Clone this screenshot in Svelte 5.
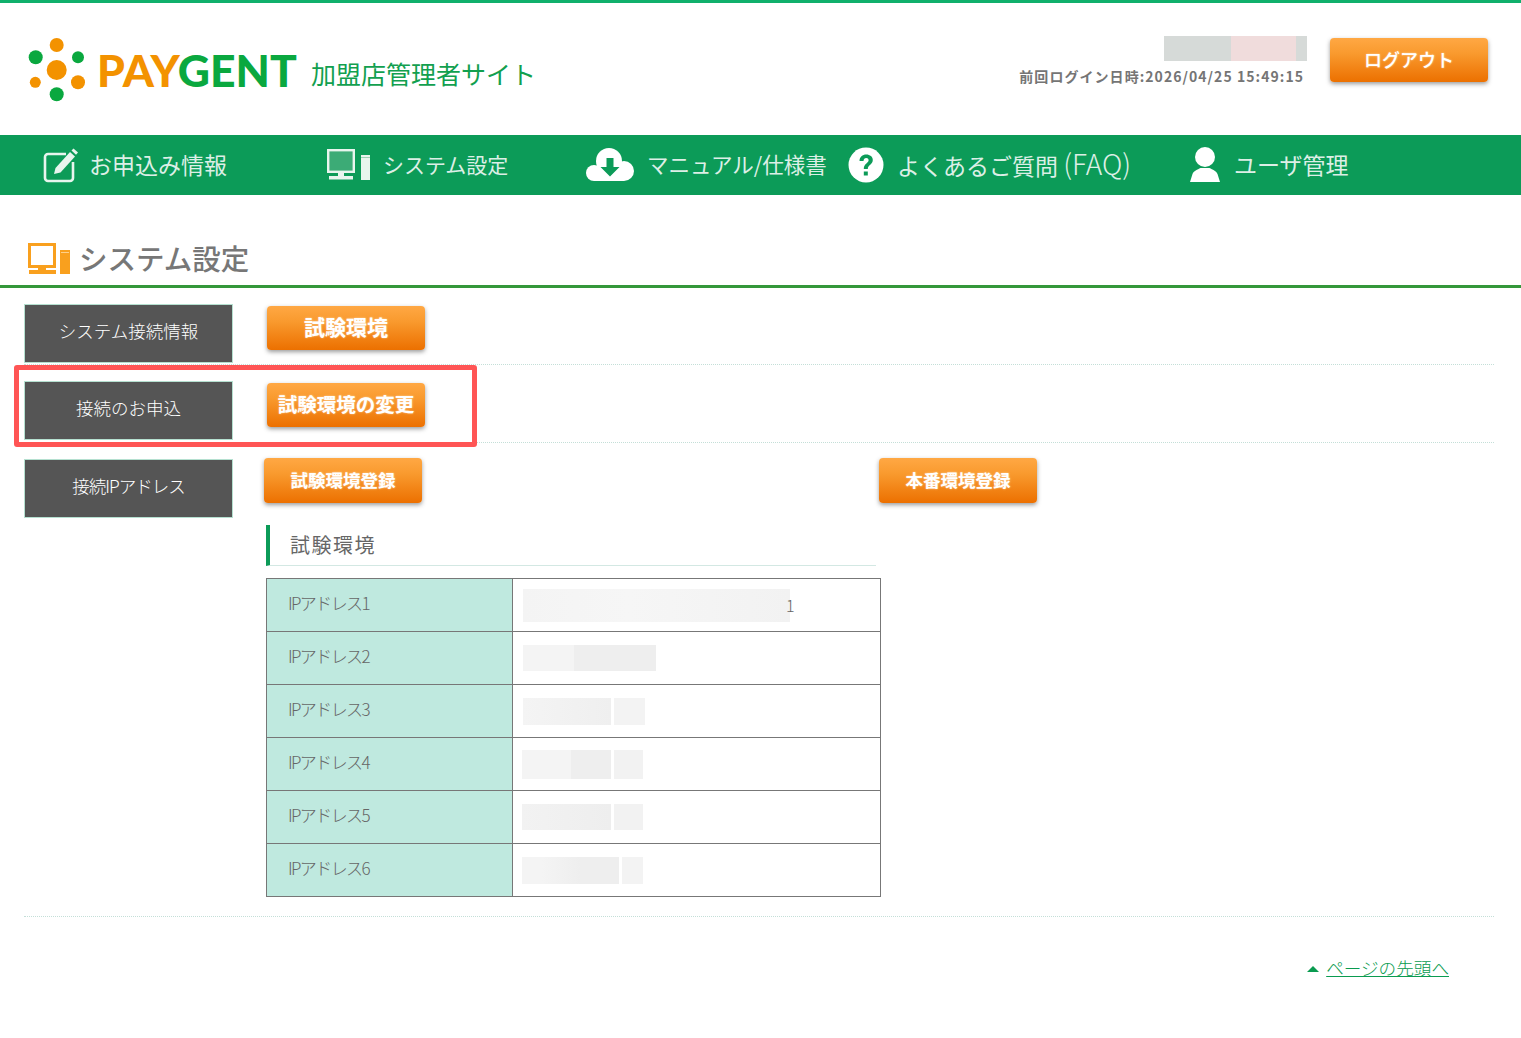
<script lang="ts">
  const addresses = [
    { name: 'IPアドレス1', tail: '1', h: 33, offset: 0, blocks: [{ w: 267, c: 'linear-gradient(90deg,#f4f4f4,#f6f6f6 40%,#f2f2f2)' }] },
    { name: 'IPアドレス2', h: 26, offset: 0, blocks: [{ w: 133, c: 'linear-gradient(90deg,#f4f4f4 38%,#eeeeee 38%)' }] },
    { name: 'IPアドレス3', h: 27, offset: 0, blocks: [{ w: 88, c: 'linear-gradient(90deg,#f4f4f4,#efefef)' }, { w: 31, c: '#f3f3f3' }] },
    { name: 'IPアドレス4', h: 29, offset: -1, blocks: [{ w: 89, c: 'linear-gradient(90deg,#f4f4f4 55%,#eeeeee 55%)' }, { w: 29, c: '#f2f2f2' }] },
    { name: 'IPアドレス5', h: 26, offset: -1, blocks: [{ w: 89, c: 'linear-gradient(90deg,#f2f2f2,#eeeeee)' }, { w: 29, c: '#f2f2f2' }] },
    { name: 'IPアドレス6', h: 27, offset: -1, blocks: [{ w: 97, c: 'linear-gradient(90deg,#f4f4f4 20%,#eeeeee 60%)' }, { w: 21, c: '#f3f3f3' }] },
  ]
</script>

<div class="page">
  <header class="head">
    <div class="brand">
      <svg class="dots" width="58" height="66" viewBox="28 37 58 66" aria-hidden="true">
        <circle cx="56.7" cy="45" r="7" fill="#f39200" />
        <circle cx="35.7" cy="57.3" r="7" fill="#0aa83f" />
        <circle cx="78" cy="57.3" r="6" fill="#0aa83f" />
        <circle cx="56.7" cy="70" r="10" fill="#f39200" />
        <circle cx="35.3" cy="82.3" r="5.5" fill="#f39200" />
        <circle cx="78" cy="82.3" r="7" fill="#f39200" />
        <circle cx="56.7" cy="94.3" r="7" fill="#0aa83f" />
      </svg>
      <div class="word"><span class="pay">PAY</span><span class="gent">GENT</span></div>
      <div class="site">加盟店管理者サイト</div>
    </div>
    <div class="account">
      <div class="who">
        <div class="who-mask"></div>
        <div class="last">前回ログイン日時:2026/04/25 15:49:15</div>
      </div>
      <a class="btn logout" href="#top">ログアウト</a>
    </div>
  </header>

  <nav class="nav">
    <a class="item i1" href="#top">
      <svg width="36" height="36" viewBox="0 0 36 36" aria-hidden="true">
        <path d="M23 7H5a3 3 0 0 0-3 3v21a3 3 0 0 0 3 3h22a3 3 0 0 0 3-3V15" fill="none" stroke="#e8f5ee" stroke-width="2.6" />
        <path d="M11 27l1.5-6L27 5l5 4.500-14.500 16z" fill="#e8f5ee" />
        <path d="M28.500 3.500l2-2 4.500 4-2 2.200z" fill="#e8f5ee" />
      </svg>
      <span>お申込み情報</span>
    </a>
    <a class="item i2" href="#top">
      <svg width="44" height="32" viewBox="0 0 44 32" aria-hidden="true">
        <rect x="1.200" y="1.200" width="25.600" height="21.600" fill="#3cab76" stroke="#e8f5ee" stroke-width="2.400" />
        <path d="M11 23h6v4h-6zM2 27h24v3.500H2z" fill="#e8f5ee" />
        <rect x="34" y="6" width="9" height="25" fill="#e8f5ee" />
        <rect x="34" y="8" width="9" height="1" fill="#9bcfb4" />
      </svg>
      <span>システム設定</span>
    </a>
    <a class="item i3" href="#top">
      <svg width="48" height="34" viewBox="0 0 48 34" aria-hidden="true">
        <circle cx="8" cy="25" r="8" fill="#fff" />
        <circle cx="23" cy="13" r="13" fill="#fff" />
        <circle cx="38" cy="23" r="10" fill="#fff" />
        <rect x="8" y="19" width="30" height="14" fill="#fff" />
        <path d="M20.500 10h7v9h6L24 28.500 14.500 19h6z" fill="#0c9b58" />
      </svg>
      <span>マニュアル/仕様書</span>
    </a>
    <a class="item i4" href="#top">
      <svg width="36" height="36" viewBox="0 0 36 36" aria-hidden="true">
        <circle cx="18" cy="18" r="17.500" fill="#fff" />
        <path d="M11.500 14c0-4 3-6.500 6.800-6.500 3.700 0 6.500 2.300 6.500 5.500 0 4.800-5 4.800-5 9h-4c0-5.500 4.800-5.800 4.800-8.700 0-1.300-1-2.200-2.400-2.200-1.500 0-2.600 1-2.700 2.900z" fill="#0c9b58" />
        <rect x="15.800" y="24.500" width="4" height="4" fill="#0c9b58" />
      </svg>
      <span>よくあるご質問 <span class="faq">(FAQ)</span></span>
    </a>
    <a class="item i5" href="#top">
      <svg width="32" height="36" viewBox="0 0 32 36" aria-hidden="true">
        <ellipse cx="16" cy="10" rx="10" ry="10" fill="#fff" />
        <path d="M1 35l2.500-8c1-3 5-4.500 8-6h9c3 1.500 7 3 8 6l2.500 8z" fill="#fff" />
      </svg>
      <span>ユーザ管理</span>
    </a>
  </nav>

  <h1 class="title">
    <svg width="42" height="32" viewBox="0 0 42 32" aria-hidden="true">
      <rect x="1.500" y="1.500" width="25" height="22" fill="none" stroke="#f9a01e" stroke-width="3" />
      <path d="M10 24h8v3h-8zM1 27h27v4H1z" fill="#f9a01e" />
      <rect x="32" y="7" width="10" height="24" fill="#f9a01e" />
      <rect x="33" y="9" width="8" height="1" fill="#ffd08a" />
    </svg>
    <span>システム設定</span>
  </h1>

  <main class="content">
    <section class="row first">
      <div class="label">システム接続情報</div>
      <div class="body"><a class="btn b-test" href="#top">試験環境</a></div>
    </section>

    <section class="row">
      <div class="label">接続のお申込</div>
      <div class="body"><a class="btn b-change" href="#top">試験環境の変更</a></div>
      <div class="callout"></div>
    </section>

    <section class="row last-row">
      <div class="label tight">接続IPアドレス</div>
      <div class="body wide">
        <div class="reg">
          <a class="btn b-reg" href="#top">試験環境登録</a>
          <a class="btn b-reg" href="#top">本番環境登録</a>
        </div>
        <h2 class="sub">試験環境</h2>
        <table class="ips">
          <tbody>
            {#each addresses as a}
              <tr>
                <th><span>{a.name}</span></th>
                <td>
                  <div class="vals" style="margin-left:{a.offset}px">
                    {#each a.blocks as b}
                      <i class="mask" style="width:{b.w}px;height:{a.h}px;background:{b.c}"></i>
                    {/each}
                    {#if a.tail}<span class="tail">{a.tail}</span>{/if}
                  </div>
                </td>
              </tr>
            {/each}
          </tbody>
        </table>
      </div>
    </section>

    <div class="totop">
      <i class="tri"></i><a href="#top">ページの先頭へ</a>
    </div>
  </main>
</div>

<style>
  :global(body) {
    margin: 0;
    background: #fff;
  }

  .page {
    font-family: "Noto Sans CJK JP", "Noto Sans", sans-serif;
    color: #666;
    min-height: 1038px;
  }

  a {
    text-decoration: none;
  }

  .head {
    height: 132px;
    border-top: 3px solid #10b06c;
    display: flex;
    justify-content: space-between;
    box-sizing: content-box;
  }

  .brand {
    display: flex;
    align-items: flex-start;
    padding: 34px 0 0 28px;
  }

  .word {
    font-family: Lato, "Liberation Sans", sans-serif;
    font-weight: 900;
    font-size: 44.500px;
    line-height: 66px;
    margin-left: 11px;
    white-space: nowrap;
  }

  .pay {
    color: #f39200;
  }

  .gent {
    color: #0aa83f;
  }

  .site {
    font-size: 25px;
    line-height: 36px;
    color: #12a04f;
    margin: 18px 0 0 14px;
    white-space: nowrap;
  }

  .account {
    display: flex;
    align-items: flex-start;
    padding: 33px 33px 0 0;
  }

  .who {
    display: flex;
    flex-direction: column;
    align-items: flex-end;
    margin-right: 26px;
  }

  .who-mask {
    width: 143px;
    height: 25px;
    margin-right: -3px;
    background: linear-gradient(90deg, #d6dad8 0 47%, #f0dcdc 47% 92%, #d6dad8 92%);
  }

  .last {
    font-size: 14px;
    line-height: 20px;
    margin-top: 5px;
    font-weight: 700;
    color: #757575;
    letter-spacing: 1.050px;
    white-space: nowrap;
  }

  .btn {
    display: inline-flex;
    align-items: center;
    justify-content: center;
    box-sizing: border-box;
    width: 158px;
    height: 44px;
    padding-bottom: 3px;
    color: #fff;
    font-weight: 700;
    white-space: nowrap;
    border-radius: 4px;
    background: linear-gradient(#ffa844, #f99a2e 35%, #ec7000);
    box-shadow: 0 2px 4px rgba(60, 60, 60, 0.5);
    text-shadow: 0 0 2px rgba(255, 240, 220, 0.7);
  }

  .logout {
    font-size: 18px;
    font-weight: 500;
    margin-top: 2px;
  }

  .nav {
    height: 60px;
    background: #0c9b58;
    display: flex;
    align-items: center;
    padding-left: 43px;
  }

  .item {
    display: flex;
    align-items: center;
    gap: 13px;
    color: #dcefe6;
    font-size: 23px;
    line-height: 30px;
    white-space: nowrap;
    flex: none;
  }

  .item span {
    margin-top: -2px;
  }

  .item .faq {
    margin-top: 0;
    font-size: 28px;
    font-weight: 300;
  }

  .i1 {
    width: 284px;
    gap: 10px;
  }

  .i2 {
    width: 259px;
    gap: 12px;
    font-size: 21px;
  }

  .i3 {
    width: 262px;
    font-size: 21.500px;
  }

  .i4 {
    width: 341px;
  }

  .title {
    margin: 0;
    height: 93px;
    box-sizing: border-box;
    padding: 48px 0 0 28px;
    border-bottom: 3px solid #34973a;
    display: flex;
    align-items: flex-start;
    gap: 9px;
    font-size: 28.500px;
    font-weight: 500;
    line-height: 34px;
    color: #777;
  }

  .title span {
    margin-top: -2px;
  }

  .content {
    padding: 16px 27px 0 24px;
  }

  .row {
    position: relative;
    display: flex;
    padding-bottom: 2px;
    margin-bottom: 16px;
    border-bottom: 1px dotted #c4dfd8;
  }

  .row.first {
    padding-bottom: 1px;
  }

  .row.last-row {
    margin-bottom: 0;
    padding-bottom: 19px;
  }

  .label {
    flex: none;
    box-sizing: border-box;
    width: 209px;
    height: 59px;
    padding-bottom: 6px;
    background: #555;
    border: 1px solid #b5e0d0;
    color: #fff;
    font-size: 17.500px;
    font-weight: 300;
    display: flex;
    align-items: center;
    justify-content: center;
    white-space: nowrap;
  }

  .label.tight {
    letter-spacing: -1px;
  }

  .body {
    margin-left: 34px;
    padding-top: 2px;
  }

  .body.wide {
    margin-left: 31px;
    padding-top: 0;
    flex: 1;
  }

  .b-test {
    font-size: 21px;
    padding-bottom: 5px;
  }

  .b-change {
    font-size: 19.500px;
  }

  .b-reg {
    font-size: 17.500px;
    height: 45px;
  }

  .callout {
    position: absolute;
    left: -10px;
    top: -16px;
    width: 463px;
    height: 82px;
    box-sizing: border-box;
    border: 5px solid #ff5555;
    border-radius: 3px;
    pointer-events: none;
  }

  .reg {
    display: flex;
    gap: 457px;
    margin-top: -1px;
  }

  .sub {
    margin: 22px 0 0 2px;
    width: 610px;
    height: 41px;
    box-sizing: border-box;
    border-left: 4px solid #0c9b58;
    border-bottom: 1px solid #d3e8e3;
    padding-left: 20px;
    font-size: 20px;
    line-height: 40px;
    font-weight: 400;
    letter-spacing: 1.500px;
    color: #666;
  }

  .ips {
    margin: 12px 0 0 2px;
    width: 615px;
    height: 319px;
    border-collapse: collapse;
    table-layout: fixed;
  }

  .ips th,
  .ips td {
    border: 1px solid #777;
    height: 53px;
    padding: 0;
    box-sizing: border-box;
  }

  .ips th {
    width: 246px;
    background: #bfe9df;
    padding-left: 21px;
    padding-bottom: 6px;
    text-align: left;
    font-size: 17px;
    font-weight: 300;
    letter-spacing: -1.600px;
    color: #666;
    white-space: nowrap;
  }

  .ips td {
    padding-left: 10px;
  }

  .vals {
    display: flex;
    align-items: center;
    gap: 3px;
  }

  .mask {
    display: block;
  }

  .tail {
    margin-left: -7px;
    font-size: 16px;
    font-weight: 300;
    color: #666;
  }

  .totop {
    display: flex;
    align-items: center;
    justify-content: flex-end;
    margin-top: 36px;
    padding-right: 45px;
    font-size: 17.600px;
    line-height: 30px;
  }

  .totop a {
    color: #0a9b50;
    text-decoration: underline;
    white-space: nowrap;
    font-weight: 300;
  }

  .tri {
    width: 0;
    height: 0;
    border-left: 6px solid transparent;
    border-right: 6px solid transparent;
    border-bottom: 6px solid #0a9b50;
    margin-right: 7px;
    margin-top: 2px;
  }
</style>
